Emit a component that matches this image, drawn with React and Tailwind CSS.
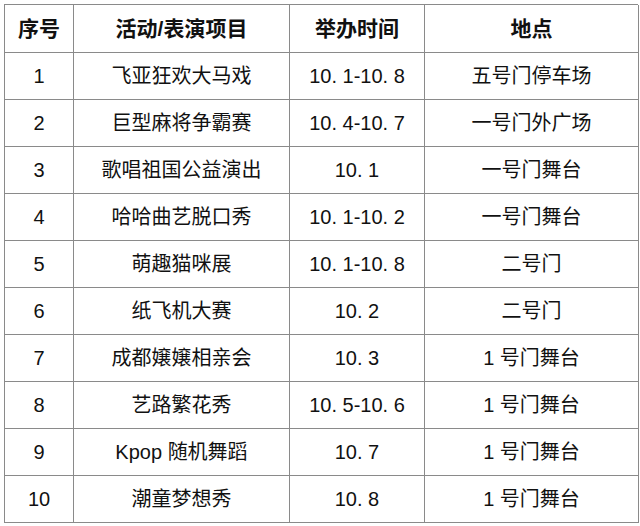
const ROWS = [
  ['1', '飞亚狂欢大马戏', '10. 1-10. 8', '五号门停车场'],
  ['2', '巨型麻将争霸赛', '10. 4-10. 7', '一号门外广场'],
  ['3', '歌唱祖国公益演出', '10. 1', '一号门舞台'],
  ['4', '哈哈曲艺脱口秀', '10. 1-10. 2', '一号门舞台'],
  ['5', '萌趣猫咪展', '10. 1-10. 8', '二号门'],
  ['6', '纸飞机大赛', '10. 2', '二号门'],
  ['7', '成都嬢嬢相亲会', '10. 3', '1 号门舞台'],
  ['8', '艺路繁花秀', '10. 5-10. 6', '1 号门舞台'],
  ['9', 'Kpop 随机舞蹈', '10. 7', '1 号门舞台'],
  ['10', '潮童梦想秀', '10. 8', '1 号门舞台'],
]

const HEAD = ['序号', '活动/表演项目', '举办时间', '地点']

const cell = 'flex items-center justify-center border-r border-b border-[#8a8a8a]'

export default function App() {
  return (
    <div className="w-[640px] h-[526px] bg-white pt-1 pl-1 font-['Liberation_Sans','Noto_Sans_CJK_SC',sans-serif] text-[#111]">
      <div className="grid grid-cols-[69px_216px_135px_214px] border-l border-t border-[#8a8a8a] w-[634px]">
        {HEAD.map(h => (
          <div key={h} className={`${cell} h-[48px] text-[21px] font-bold`}>{h}</div>
        ))}
        {ROWS.map(row => row.map((v, i) => (
          <div key={row[0] + i} className={`${cell} h-[47px] text-[20px]`}>{v}</div>
        )))}
      </div>
    </div>
  )
}
